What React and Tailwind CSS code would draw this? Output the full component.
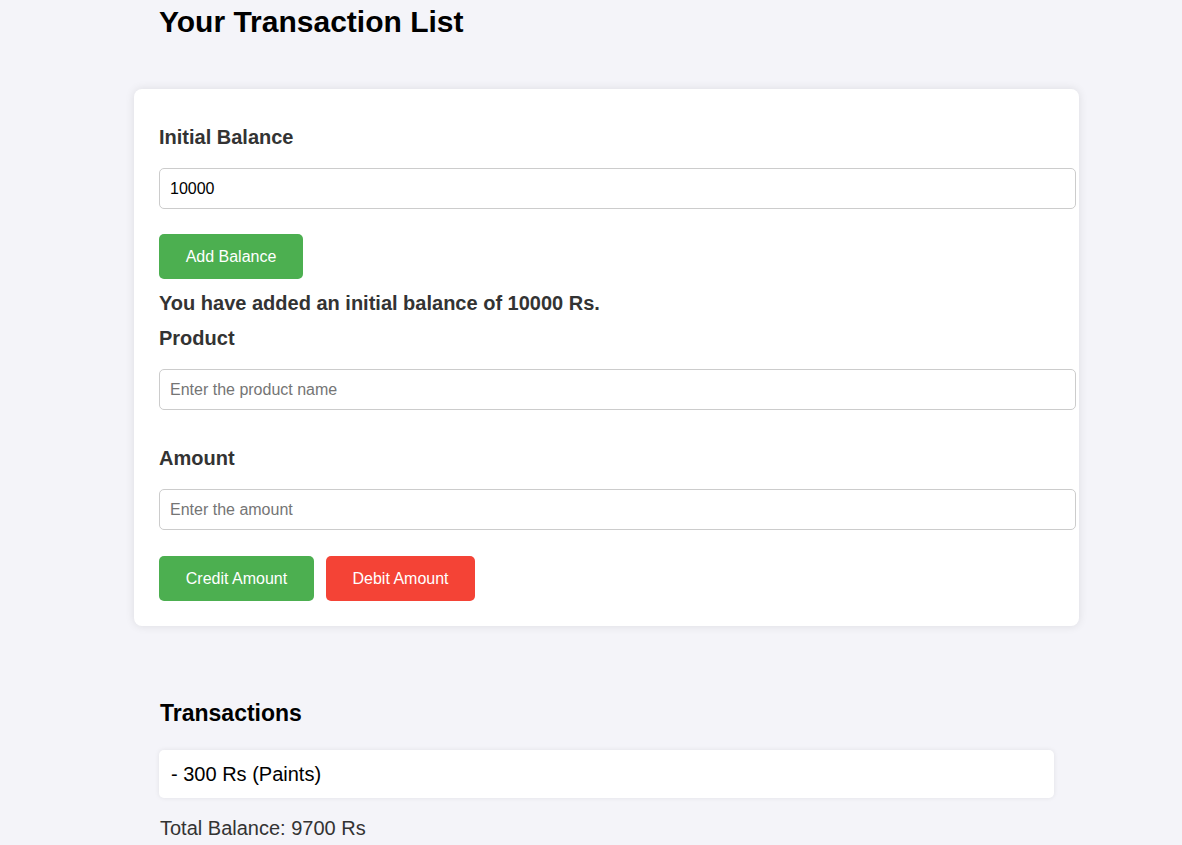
import React from "react";

export default function App() {
  const font = { fontFamily: '"Liberation Sans", Arial, sans-serif' };
  return (
    <div className="min-h-[845px] bg-[#f4f4f9] pl-[134px]" style={font}>
      <div className="w-[945px]">
        <h1 className="px-[25px] pt-[5px] text-[30px] leading-[34px] font-bold text-black">
          Your Transaction List
        </h1>

        <div className="mt-[50px] rounded-[8px] bg-white p-[25px] shadow-[0_0_10px_rgba(0,0,0,0.1)]">
          <label className="mt-[12px] mb-[19px] block text-[20px] leading-[23px] font-bold text-[#333]">
            Initial Balance
          </label>
          <input
            type="number"
            defaultValue="10000"
            className="box-content block w-full rounded-[5px] border border-[#ccc] px-[10px] py-[10px] text-[16px] leading-[19px] h-[19px] text-black outline-none [appearance:textfield]"
          />
          <button className="mt-[25px] flex h-[45px] w-[144px] items-center justify-center rounded-[5px] bg-[#4CAF50] text-[16px] text-white">
            Add Balance
          </button>
          <p className="mt-[13px] text-[20px] leading-[23px] font-bold text-[#333]">
            You have added an initial balance of 10000 Rs.
          </p>

          <label className="mt-[12px] mb-[19px] block text-[20px] leading-[23px] font-bold text-[#333]">
            Product
          </label>
          <input
            type="text"
            placeholder="Enter the product name"
            className="box-content block w-full rounded-[5px] border border-[#ccc] px-[10px] py-[10px] text-[16px] leading-[19px] h-[19px] text-black outline-none placeholder:text-[#757575]"
          />

          <label className="mt-[37px] mb-[19px] block text-[20px] leading-[23px] font-bold text-[#333]">
            Amount
          </label>
          <input
            type="text"
            placeholder="Enter the amount"
            className="box-content block w-full rounded-[5px] border border-[#ccc] px-[10px] py-[10px] text-[16px] leading-[19px] h-[19px] text-black outline-none placeholder:text-[#757575]"
          />

          <div className="mt-[26px] flex gap-[12px]">
            <button className="flex h-[45px] w-[155px] items-center justify-center rounded-[5px] bg-[#4CAF50] text-[16px] text-white">
              Credit Amount
            </button>
            <button className="flex h-[45px] w-[149px] items-center justify-center rounded-[5px] bg-[#f44336] text-[16px] text-white">
              Debit Amount
            </button>
          </div>
        </div>

        <div className="px-[25px] pt-[74px]">
          <h2 className="pl-[1px] text-[23px] leading-[26px] font-bold text-black">
            Transactions
          </h2>
          <ul className="mt-[24px]">
            <li className="rounded-[5px] bg-white px-[12px] py-[12px] text-[20px] leading-[24px] text-black shadow-[0_0_5px_rgba(0,0,0,0.08)]">
              - 300 Rs (Paints)
            </li>
          </ul>
          <p className="mt-[19px] pl-[1px] text-[20px] leading-[23px] text-[#333]">
            Total Balance: 9700 Rs
          </p>
        </div>
      </div>
    </div>
  );
}
